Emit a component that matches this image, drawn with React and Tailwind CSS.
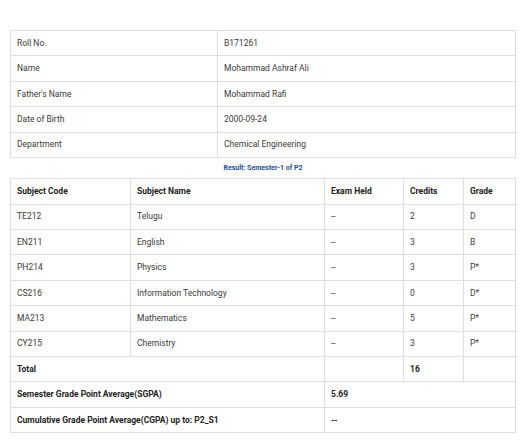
const student = [
  ["Roll No.", "B171261"],
  ["Name", "Mohammad Ashraf Ali"],
  ["Father's Name", "Mohammad Rafi"],
  ["Date of Birth", "2000-09-24"],
  ["Department", "Chemical Engineering"],
];

const subjects = [
  ["TE212", "Telugu", "--", "2", "D"],
  ["EN211", "English", "--", "3", "B"],
  ["PH214", "Physics", "--", "3", "P*"],
  ["CS216", "Information Technology", "--", "0", "D*"],
  ["MA213", "Mathematics", "--", "5", "P*"],
  ["CY215", "Chemistry", "--", "3", "P*"],
];

const cell = "border border-[#dedede] px-[6px] align-middle";

export default function App() {
  return (
    <div className="w-[529px] h-[448px] bg-white pt-[30px] pl-[10px] text-[8.5px] text-[#3a3a3a]" style={{ fontFamily: "Roboto, 'Liberation Sans', sans-serif" }}>
      {/* Student details */}
      <table className="w-[506px] border-collapse table-fixed">
        <colgroup>
          <col className="w-[207px]" />
          <col />
        </colgroup>
        <tbody>
          {student.map(([label, value]) => (
            <tr key={label} className="h-[25.4px]">
              <td className={cell}>{label}</td>
              <td className={cell}>{value}</td>
            </tr>
          ))}
        </tbody>
      </table>

      <div className="w-[506px] h-[20px] flex items-center justify-center text-[7px] font-bold text-[#1a4f9c]">
        Result: Semester-1 of P2
      </div>

      {/* Marks */}
      <table className="w-[506px] border-collapse table-fixed">
        <colgroup>
          <col className="w-[120px]" />
          <col className="w-[194px]" />
          <col className="w-[79px]" />
          <col className="w-[60px]" />
          <col />
        </colgroup>
        <thead>
          <tr className="h-[25.6px] font-bold text-left text-[#222]">
            <th className={cell}>Subject Code</th>
            <th className={cell}>Subject Name</th>
            <th className={cell}>Exam Held</th>
            <th className={cell}>Credits</th>
            <th className={cell}>Grade</th>
          </tr>
        </thead>
        <tbody>
          {subjects.map((row) => (
            <tr key={row[0]} className="h-[25.4px]">
              {row.map((v, i) => (
                <td key={i} className={cell}>{v}</td>
              ))}
            </tr>
          ))}
          <tr className="h-[25.6px] font-bold text-[#222]">
            <td className={cell} colSpan={2}>Total</td>
            <td className={cell}></td>
            <td className={cell}>16</td>
            <td className={cell}></td>
          </tr>
          <tr className="h-[25.4px] font-bold text-[#222]">
            <td className={cell} colSpan={2}>Semester Grade Point Average(SGPA)</td>
            <td className={cell} colSpan={3}>5.69</td>
          </tr>
          <tr className="h-[25.6px] font-bold text-[#222]">
            <td className={cell} colSpan={2}>Cumulative Grade Point Average(CGPA) up to: P2_S1</td>
            <td className={cell} colSpan={3}>--</td>
          </tr>
        </tbody>
      </table>
    </div>
  );
}
